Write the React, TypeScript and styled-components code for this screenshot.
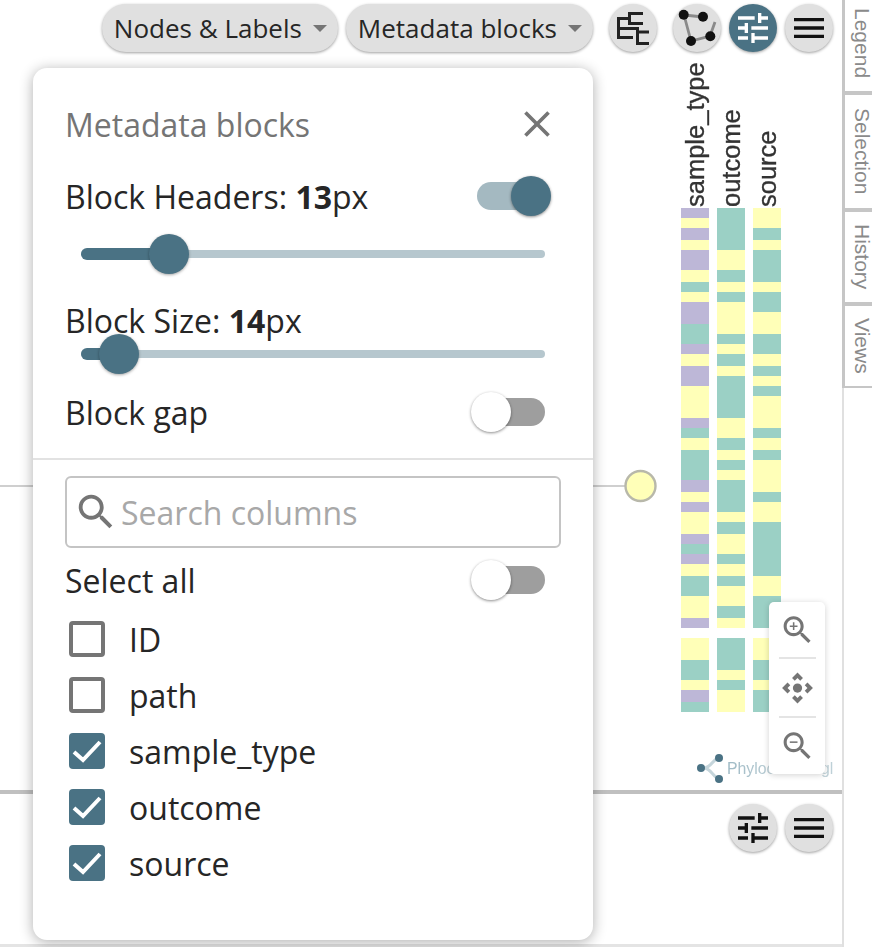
import React from 'react';
import styled, { createGlobalStyle } from 'styled-components';

const Global = createGlobalStyle`
  html, body { margin: 0; padding: 0; background: #fff; }
  body { font-family: "Open Sans", sans-serif; color: #222; overflow: hidden; }
`;

const ACCENT = '#4A7284';

const Page = styled.div`
  width: 872px;
  height: 947px;
  display: flex;
  position: relative;
  overflow: hidden;
`;
const Workspace = styled.div`
  width: 842px;
  height: 944px;
  flex: none;
  display: flex;
  flex-direction: column;
  border-bottom: 3px solid #e4e4e4;
  position: relative;
`;
const Canvas = styled.div`
  height: 790px;
  position: relative;
  border-bottom: 4px solid #c0c0c0;
`;
const Drawing = styled.svg`
  position: absolute;
  inset: 0;
  filter: blur(0.6px);
`;
const Toolbar = styled.div`
  position: absolute;
  top: 4px;
  right: 9px;
  display: flex;
  align-items: center;
`;
const Pill = styled.div`
  height: 48px;
  box-sizing: border-box;
  border-radius: 24px;
  background: #e0e0e0;
  box-shadow: 0 1px 3px rgba(0, 0, 0, 0.38);
  display: flex;
  align-items: center;
  gap: 11px;
  padding: 0 11px 0 12px;
  margin-right: 8px;
  font-size: 26px;
  color: #262626;
  white-space: nowrap;
`;
const Caret = styled.span`
  width: 0;
  height: 0;
  border-left: 7px solid transparent;
  border-right: 7px solid transparent;
  border-top: 7px solid #757575;
`;
const RoundButton = styled.div<{ $active?: boolean; $gap?: number }>`
  width: 48px;
  height: 48px;
  flex: none;
  border-radius: 50%;
  background: ${p => (p.$active ? ACCENT : '#e0e0e0')};
  color: ${p => (p.$active ? '#fff' : '#111')};
  box-shadow: 0 1px 3px rgba(0, 0, 0, 0.38);
  display: flex;
  align-items: center;
  justify-content: center;
  margin-left: ${p => p.$gap ?? 0}px;
`;
const BottomPanel = styled.div`
  flex: 1;
  display: flex;
  justify-content: flex-end;
  align-items: flex-start;
  gap: 8px;
  padding: 10px 9px 0 0;
`;
const Sidebar = styled.div`
  width: 30px;
  flex: none;
  box-sizing: border-box;
  display: flex;
  flex-direction: column;
  border-left: 2px solid #e0e0e0;
`;
const SideTab = styled.div<{ $h: number; $line?: number }>`
  height: ${p => p.$h}px;
  box-sizing: border-box;
  margin-left: -2px;
  border-left: 3px solid #c6c6c6;
  border-bottom: ${p => p.$line ?? 4}px solid #c6c6c6;
  writing-mode: vertical-rl;
  display: flex;
  align-items: center;
  justify-content: center;
  padding-left: 7px;
  font-family: "Liberation Sans", Arial, sans-serif;
  font-size: 21px;
  line-height: 20px;
  color: #8a8a8a;
  background: #fff;
`;
const LegendTab = styled(SideTab)`
  justify-content: flex-start;
  padding-top: 8px;
`;
const Popover = styled.div`
  position: absolute;
  left: 33px;
  top: 68px;
  width: 560px;
  height: 872px;
  box-sizing: border-box;
  background: #fff;
  border-radius: 14px;
  box-shadow: 0 2px 14px rgba(0, 0, 0, 0.32);
  display: flex;
  flex-direction: column;
`;
const SettingsPart = styled.div`
  height: 392px;
  flex: none;
  box-sizing: border-box;
  padding: 33px 41px 0 32px;
  border-bottom: 2px solid #e2e2e2;
  display: flex;
  flex-direction: column;
`;
const TitleRow = styled.div`
  display: flex;
  justify-content: space-between;
  align-items: center;
  height: 46px;
  margin-bottom: 26px;
`;
const Title = styled.div`
  font-size: 32px;
  color: #757575;
`;
const CloseIcon = styled.span`
  display: flex;
  color: #757575;
  margin-right: -7px;
`;
const LabelRow = styled.div<{ $h: number }>`
  height: ${p => p.$h}px;
  flex: none;
  display: flex;
  justify-content: space-between;
  align-items: center;
  font-size: 32px;
  color: #262626;
  b { font-weight: 700; }
`;
const Switch = styled.span<{ $flush?: boolean }>`
  width: 68px;
  height: 28px;
  position: relative;
  display: block;
  flex: none;
  margin-right: ${p => (p.$flush ? 0 : 7)}px;
`;
const SwitchTrack = styled.span<{ $on?: boolean }>`
  position: absolute;
  left: 0;
  right: 0;
  top: 0;
  bottom: 0;
  border-radius: 14px;
  background: ${p => (p.$on ? '#A4B9C1' : '#9e9e9e')};
`;
const SwitchKnob = styled.span<{ $on?: boolean }>`
  position: absolute;
  top: -6px;
  ${p => (p.$on ? 'right: -6px;' : 'left: -6px;')}
  width: 40px;
  height: 40px;
  border-radius: 50%;
  background: ${p => (p.$on ? ACCENT : '#fff')};
  box-shadow: 0 1px 3px rgba(0, 0, 0, 0.45);
`;
const Slider = styled.div<{ $before: number; $after: number }>`
  height: 24px;
  flex: none;
  margin: ${p => p.$before}px 0 ${p => p.$after}px 16px;
  width: 464px;
  position: relative;
  display: flex;
  align-items: center;
`;
const SliderRail = styled.span`
  position: absolute;
  left: 0;
  right: 0;
  height: 8px;
  border-radius: 4px;
  background: #B6C7CE;
`;
const SliderFill = styled.span`
  position: absolute;
  left: 0;
  height: 12px;
  border-radius: 6px 0 0 6px;
  background: ${ACCENT};
`;
const SliderThumb = styled.span`
  position: absolute;
  width: 40px;
  height: 40px;
  margin-left: -20px;
  border-radius: 50%;
  background: ${ACCENT};
  box-shadow: 0 1px 3px rgba(0, 0, 0, 0.35);
`;
const ColumnsPart = styled.div`
  padding: 16px 32px 0 32px;
  display: flex;
  flex-direction: column;
`;
const SearchBox = styled.div`
  height: 72px;
  box-sizing: border-box;
  border: 2px solid #c4c4c4;
  border-radius: 6px;
  display: flex;
  align-items: center;
  gap: 2px;
  padding-left: 6px;
  font-size: 32px;
  color: #a8a8a8;
  margin-bottom: 10px;
`;
const SearchIcon = styled.span`
  display: flex;
  color: #757575;
`;
const SelectAll = styled.div`
  height: 44px;
  display: flex;
  justify-content: space-between;
  align-items: center;
  font-size: 32px;
  color: #262626;
  padding-right: 16px;
  margin-bottom: 9px;
`;
const ColumnRow = styled.div`
  height: 56px;
  display: flex;
  align-items: center;
  gap: 24px;
  padding-left: 4px;
  font-size: 32px;
  color: #262626;
`;
const Box = styled.span<{ $checked?: boolean }>`
  width: 36px;
  height: 36px;
  box-sizing: border-box;
  border-radius: 4px;
  display: flex;
  align-items: center;
  justify-content: center;
  background: ${p => (p.$checked ? ACCENT : '#fff')};
  border: ${p => (p.$checked ? '0' : '4px solid #757575')};
`;
const ZoomControls = styled.div`
  position: absolute;
  left: 769px;
  top: 602px;
  width: 56px;
  height: 172px;
  box-sizing: border-box;
  background: #fff;
  border-radius: 5px;
  box-shadow: 0 1px 6px rgba(0, 0, 0, 0.18);
  display: flex;
  flex-direction: column;
  align-items: center;
  color: #757575;
`;
const ZoomCell = styled.div`
  width: 37px;
  height: 56px;
  display: flex;
  align-items: center;
  justify-content: center;
  & + & { border-top: 2px solid #e4e4e4; height: 57px; }
`;

type Seg = [number, number, 'P' | 'Y' | 'G'];
const COLOR = { P: '#BDB7D7', Y: '#FFFFB8', G: '#9BD0C5' };
const seq = (start: number, parts: string): Seg[] => {
  let y = start;
  return parts.split(' ').map(s => {
    const end = Number(s.slice(1));
    const seg: Seg = [y, end, s[0] as 'P' | 'Y' | 'G'];
    y = end;
    return seg;
  });
};
const columns: { x: number; name: string; upper: string; lower: string }[] = [
  {
    x: 681,
    name: 'sample_type',
    upper:
      'P218 Y228 P240 Y250 P270 Y282 G292 Y302 P324 G344 P354 Y366 P386 Y418 P428 G438 Y450 G480 P492 Y502 P512 Y534 P544 G554 P564 Y576 G596 Y618 P628',
    lower: 'Y660 G680 Y690 P702 G712',
  },
  {
    x: 717,
    name: 'outcome',
    upper:
      'G250 Y270 G282 Y292 G302 Y334 G344 Y354 G366 Y376 G418 Y438 G450 Y460 G470 Y480 G512 Y522 G534 Y554 G564 Y576 G586 Y606 G618 Y628',
    lower: 'G670 Y680 G690 Y712',
  },
  {
    x: 753,
    name: 'source',
    upper:
      'Y228 G240 Y250 G282 Y292 G312 Y334 G354 Y366 G376 Y386 G396 Y428 G438 Y450 G460 Y492 G502 Y522 G576 Y596 G628',
    lower: 'Y660 G680 Y690 G712',
  },
];

const Tune = ({ size = 40 }: { size?: number }) => (
  <svg width={size} height={size} viewBox="0 0 24 24" fill="currentColor">
    <path d="M3 17v2h6v-2H3zM3 5v2h10V5H3zm10 16v-2h8v-2h-8v-2h-2v6h2zM7 9v2H3v2h4v2h2V9H7zm14 4v-2H11v2h10zm-6-4h2V7h4V5h-4V3h-2v6z" />
  </svg>
);
const Menu = ({ size = 40 }: { size?: number }) => (
  <svg width={size} height={size} viewBox="0 0 24 24" fill="currentColor">
    <path d="M3 18h18v-2H3v2zm0-5h18v-2H3v2zm0-7v2h18V6H3z" />
  </svg>
);
const Tree = () => (
  <svg width="48" height="48" viewBox="0 0 48 48" fill="none" stroke="#222" strokeWidth="3">
    <path d="M34 9.5H20.5V19.5H34M20.5 14.5H9.5V33.5H24M9.5 24.5H28.5V39.5H40M28.5 28H40" />
  </svg>
);
const Polygon = () => (
  <svg width="48" height="48" viewBox="0 0 48 48">
    <path d="M11 11L30 13M11 11L18 37L37 32L42 18" fill="none" stroke="#8a8a8a" strokeWidth="2.8" />
    <circle cx="10.7" cy="10.7" r="5" fill="#111" />
    <circle cx="30" cy="12.7" r="5" fill="#111" />
    <circle cx="37.3" cy="32.3" r="5" fill="#111" />
    <circle cx="18" cy="37" r="5" fill="#111" />
  </svg>
);
const Check = () => (
  <svg width="36" height="36" viewBox="0 0 36 36" fill="none" stroke="#fff" strokeWidth="4">
    <path d="M5 19L14 27L31 9" />
  </svg>
);
const MagPlus = ({ minus }: { minus?: boolean }) => (
  <svg width="38" height="38" viewBox="0 0 24 24" fill="currentColor">
    <path d="M15.5 14h-.79l-.28-.27C15.41 12.59 16 11.11 16 9.5 16 5.91 13.09 3 9.5 3S3 5.91 3 9.5 5.91 16 9.5 16c1.61 0 3.09-.59 4.23-1.57l.27.28v.79l5 4.99L20.49 19l-4.99-5zm-6 0C7.01 14 5 11.99 5 9.5S7.01 5 9.5 5 14 7.01 14 9.5 11.99 14 9.5 14z" />
    <path d={minus ? 'M7 9h5v1H7z' : 'M12 10h-2v2H9v-2H7V9h2V7h1v2h2v1z'} />
  </svg>
);
const Pan = () => (
  <svg width="38" height="38" viewBox="0 0 24 24" fill="currentColor">
    <path d="M15.54 5.54L13.77 7.3 12 5.54 10.23 7.3 8.46 5.54 12 2zm2.92 10l-1.76-1.77L18.46 12l-1.76-1.77 1.76-1.77L22 12zm-10 2.92l1.77-1.76L12 18.46l1.77-1.76 1.77 1.76L12 22zm-2.92-10l1.76 1.77L5.54 12l1.76 1.77-1.76 1.77L2 12z" />
    <circle cx="12" cy="12" r="3" />
  </svg>
);

const App = () => (
  <Page>
    <Global />
    <Workspace>
      <Canvas>
        <Drawing width="842" height="790" viewBox="0 0 842 790">
          <defs>
            <linearGradient id="fade" x1="727" x2="835" y1="0" y2="0" gradientUnits="userSpaceOnUse">
              <stop offset="0" stopColor="#9FBAC5" />
              <stop offset="0.35" stopColor="#B5CAD2" />
              <stop offset="0.55" stopColor="#DCE6EA" />
              <stop offset="1" stopColor="#BCCFD6" />
            </linearGradient>
          </defs>
          <line x1="0" y1="486" x2="626" y2="486" stroke="#cfcfcf" strokeWidth="2" />
          <circle cx="640.5" cy="486" r="15" fill="#FFFFB8" stroke="#b8b8aa" strokeWidth="2.4" />
          {columns.map(c => (
            <g key={c.name}>
              {[...seq(208, c.upper), ...seq(638, c.lower)].map(([a, b, k]) => (
                <rect key={a} x={c.x} y={a} width="28" height={b - a} fill={COLOR[k]} />
              ))}
              <text
                transform={`translate(${c.x + 22.5} 207) rotate(-90)`}
                fontFamily="Liberation Sans, Arial, sans-serif"
                fontSize="25.5"
                fill="#333"
                stroke="#333"
                strokeWidth="0.35"
              >
                {c.name}
              </text>
            </g>
          ))}
          <path d="M703 768C712 768 712 759 719 758M703 768C712 768 712 777 719 779" stroke="#C5D5DB" strokeWidth="3" fill="none" />
          <circle cx="701" cy="768" r="4" fill="#4A7284" />
          <circle cx="719" cy="758" r="4" fill="#4A7284" />
          <circle cx="719" cy="779" r="4" fill="#4A7284" />
          <text x="727" y="774" fontFamily="Liberation Sans, Arial, sans-serif" fontSize="15.8" fill="url(#fade)">
            Phylocanvas.gl
          </text>
        </Drawing>
        <Toolbar>
          <Pill>
            Nodes &amp; Labels
            <Caret />
          </Pill>
          <Pill>
            Metadata blocks
            <Caret />
          </Pill>
          <RoundButton $gap={8}>
            <Tree />
          </RoundButton>
          <RoundButton $gap={16}>
            <Polygon />
          </RoundButton>
          <RoundButton $active $gap={8}>
            <Tune />
          </RoundButton>
          <RoundButton $gap={8}>
            <Menu />
          </RoundButton>
        </Toolbar>
        <ZoomControls>
          <ZoomCell>
            <MagPlus />
          </ZoomCell>
          <ZoomCell>
            <Pan />
          </ZoomCell>
          <ZoomCell>
            <MagPlus minus />
          </ZoomCell>
        </ZoomControls>
      </Canvas>
      <BottomPanel>
        <RoundButton>
          <Tune />
        </RoundButton>
        <RoundButton>
          <Menu />
        </RoundButton>
      </BottomPanel>
    </Workspace>
    <Sidebar>
      <LegendTab $h={95}>Legend</LegendTab>
      <SideTab $h={117}>Selection</SideTab>
      <SideTab $h={94}>History</SideTab>
      <SideTab $h={82} $line={2}>Views</SideTab>
    </Sidebar>
    <Popover>
      <SettingsPart>
        <TitleRow>
          <Title>Metadata blocks</Title>
          <CloseIcon>
            <svg width="44" height="44" viewBox="0 0 24 24" fill="currentColor">
              <path d="M19 6.41L17.59 5 12 10.59 6.41 5 5 6.41 10.59 12 5 17.59 6.41 19 12 13.41 17.59 19 19 17.59 13.41 12z" />
            </svg>
          </CloseIcon>
        </TitleRow>
        <LabelRow $h={46}>
          <span>
            Block Headers: <b>13</b>px
          </span>
          <Switch>
            <SwitchTrack $on />
            <SwitchKnob $on />
          </Switch>
        </LabelRow>
        <Slider $before={23} $after={32}>
          <SliderRail />
          <SliderFill style={{ width: 88 }} />
          <SliderThumb style={{ left: 88 }} />
        </Slider>
        <LabelRow $h={44}>
          <span>
            Block Size: <b>14</b>px
          </span>
        </LabelRow>
        <Slider $before={0} $after={23}>
          <SliderRail />
          <SliderFill style={{ width: 38 }} />
          <SliderThumb style={{ left: 38 }} />
        </Slider>
        <LabelRow $h={46}>
          <span>Block gap</span>
          <Switch>
            <SwitchTrack />
            <SwitchKnob />
          </Switch>
        </LabelRow>
      </SettingsPart>
      <ColumnsPart>
        <SearchBox>
          <SearchIcon>
            <svg width="46" height="46" viewBox="0 0 24 24" fill="currentColor">
              <path d="M15.5 14h-.79l-.28-.27C15.41 12.59 16 11.11 16 9.5 16 5.91 13.09 3 9.5 3S3 5.91 3 9.5 5.91 16 9.5 16c1.61 0 3.09-.59 4.23-1.57l.27.28v.79l5 4.99L20.49 19l-4.99-5zm-6 0C7.01 14 5 11.99 5 9.5S7.01 5 9.5 5 14 7.01 14 9.5 11.99 14 9.5 14z" />
            </svg>
          </SearchIcon>
          Search columns
        </SearchBox>
        <SelectAll>
          Select all
          <Switch $flush>
            <SwitchTrack />
            <SwitchKnob />
          </Switch>
        </SelectAll>
        {[
          ['ID', false],
          ['path', false],
          ['sample_type', true],
          ['outcome', true],
          ['source', true],
        ].map(([name, on]) => (
          <ColumnRow key={name as string}>
            <Box $checked={on as boolean}>{on ? <Check /> : null}</Box>
            {name}
          </ColumnRow>
        ))}
      </ColumnsPart>
    </Popover>
  </Page>
);

export default App;
